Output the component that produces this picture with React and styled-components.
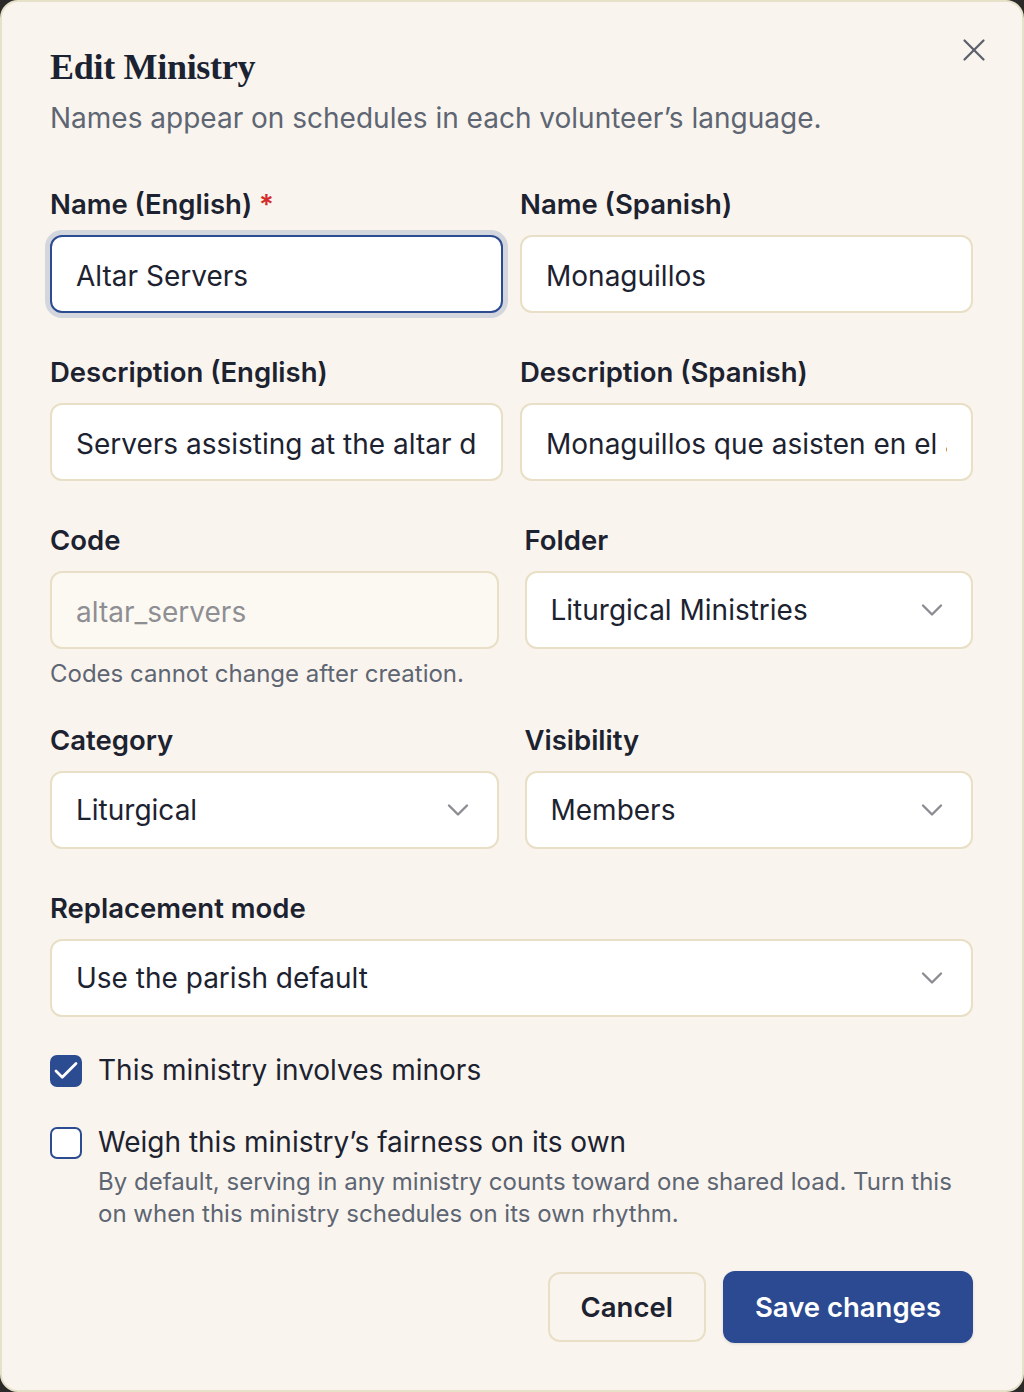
import React from 'react';
import styled, { createGlobalStyle } from 'styled-components';
import { X, ChevronDown, Check } from 'lucide-react';

const GlobalStyle = createGlobalStyle`
  html, body {
    margin: 0;
    padding: 0;
    background: #2b2a28;
  }
  * { box-sizing: border-box; }
  body {
    font-family: Inter, "Noto Sans", sans-serif;
    color: #1d2230;
  }
`

const Chevron = () => <ChevronDown size={36} strokeWidth={1.6} />

export default function App(){
  return (
    <>
      <GlobalStyle />
      <Dialog>
        <CloseButton aria-label='Close'>
          <X size={38} strokeWidth={1.4} />
        </CloseButton>
        <Title>Edit Ministry</Title>
        <Subtitle>Names appear on schedules in each volunteer’s language.</Subtitle>

        <Grid $gap={17} $rowGap={41} $top={50}>
          <Field>
            <Label>Name (English) <Required>*</Required></Label>
            <TextInput $focused readOnly value='Altar Servers' />
          </Field>
          <Field>
            <Label>Name (Spanish)</Label>
            <TextInput readOnly value='Monaguillos' />
          </Field>
          <Field>
            <Label>Description (English)</Label>
            <TextInput readOnly value='Servers assisting at the altar during Mass' />
          </Field>
          <Field>
            <Label>Description (Spanish)</Label>
            <TextInput readOnly value='Monaguillos que asisten en el altar durante la Misa' />
          </Field>
        </Grid>

        <Grid $gap={26} $rowGap={32} $top={41}>
          <Field>
            <Label>Code</Label>
            <TextInput $disabled readOnly value='altar_servers' />
            <Hint>Codes cannot change after creation.</Hint>
          </Field>
          <Field>
            <Label>Folder</Label>
            <Select>Liturgical Ministries<Chevron /></Select>
          </Field>
          <Field>
            <Label>Category</Label>
            <Select>Liturgical<Chevron /></Select>
          </Field>
          <Field>
            <Label>Visibility</Label>
            <Select>Members<Chevron /></Select>
          </Field>
        </Grid>

        <Field $top={41}>
          <Label>Replacement mode</Label>
          <Select>Use the parish default<Chevron /></Select>
        </Field>

        <Checks>
          <CheckRow>
            <Box $checked><Check size={30} strokeWidth={2.2} /></Box>
            <CheckText>
              <CheckLabel>This ministry involves minors</CheckLabel>
            </CheckText>
          </CheckRow>
          <CheckRow>
            <Box />
            <CheckText>
              <CheckLabel>Weigh this ministry’s fairness on its own</CheckLabel>
              <CheckHint>By default, serving in any ministry counts toward one shared load. Turn this on when this ministry schedules on its own rhythm.</CheckHint>
            </CheckText>
          </CheckRow>
        </Checks>

        <Footer>
          <Button>Cancel</Button>
          <Button $primary>Save changes</Button>
        </Footer>
      </Dialog>
    </>
  )
}

const Dialog = styled.div`
  position: relative;
  width: 1024px;
  height: 1392px;
  background: #f9f5ee;
  border: 2px solid #e6e1c9;
  border-radius: 18px;
  padding: 41px 49px 0 48px;
  display: flex;
  flex-direction: column;
`

const CloseButton = styled.button`
  position: absolute;
  top: 29px;
  right: 29px;
  border: none;
  background: none;
  padding: 0;
  color: #5b606a;
  display: flex;
`

const Title = styled.h1`
  margin: 0;
  font-family: "Liberation Serif", "DejaVu Serif", serif;
  font-weight: 700;
  font-size: 36px;
  line-height: 48px;
  letter-spacing: -0.3px;
  color: #1b2232;
`

const Subtitle = styled.p`
  margin: 9px 0 0;
  font-size: 28px;
  line-height: 36px;
  color: #5e6573;
`

const Grid = styled.div`
  display: grid;
  grid-template-columns: 1fr 1fr;
  column-gap: ${p => p.$gap}px;
  row-gap: ${p => p.$rowGap}px;
  margin-top: ${p => p.$top}px;
`

const Field = styled.div`
  display: flex;
  flex-direction: column;
  margin-top: ${p => p.$top || 0}px;
`

const Label = styled.label`
  font-size: 27.5px;
  font-weight: 600;
  line-height: 36px;
  color: #1d2230;
  margin-bottom: 13px;
`

const Required = styled.span`
  color: #d42a2a;
`

const TextInput = styled.input`
  width: 100%;
  height: 78px;
  padding: 3px 24px 0;
  font-family: Inter, sans-serif;
  font-size: 28px;
  border-radius: 12px;
  outline: none;
  border: 2px solid ${p => p.$focused ? '#2c4c91' : '#e9dfc6'};
  background: ${p => p.$disabled ? '#fcf9f3' : '#ffffff'};
  color: ${p => p.$disabled ? '#8f8f93' : '#1d2230'};
  box-shadow: ${p => p.$focused ? '0 0 0 5px #d3d6dd' : 'none'};
`

const Hint = styled.p`
  margin: 9px 0 0;
  font-size: 24px;
  line-height: 32px;
  color: #5e6573;
`

const Select = styled.div`
  height: 78px;
  padding: 0 21px 0 24px;
  display: flex;
  align-items: center;
  justify-content: space-between;
  font-size: 28px;
  background: #ffffff;
  border: 2px solid #e9dfc6;
  border-radius: 12px;
  color: #1d2230;
  svg { color: #8b8d92; }
`

const Checks = styled.div`
  display: flex;
  flex-direction: column;
  gap: 36px;
  margin-top: 35px;
`

const CheckRow = styled.div`
  display: flex;
  align-items: flex-start;
  gap: 16px;
`

const Box = styled.span`
  width: 32px;
  height: 32px;
  flex: none;
  margin-top: 3px;
  border-radius: 7px;
  border: 2px solid #2c4c91;
  background: ${p => p.$checked ? '#2c4c91' : '#ffffff'};
  color: #ffffff;
  display: flex;
  align-items: center;
  justify-content: center;
  svg { flex: none; }
`

const CheckText = styled.div`
  display: flex;
  flex-direction: column;
`

const CheckLabel = styled.span`
  font-size: 28px;
  line-height: 36px;
  color: #1d2230;
`

const CheckHint = styled.span`
  margin-top: 6px;
  font-size: 24px;
  line-height: 32px;
  color: #5e6573;
`

const Footer = styled.div`
  display: flex;
  justify-content: flex-end;
  align-items: center;
  gap: 17px;
  margin-top: 41px;
`

const Button = styled.button`
  height: ${p => p.$primary ? 72 : 70}px;
  padding: 0 ${p => p.$primary ? 30 : 31}px;
  border-radius: 12px;
  font-family: Inter, sans-serif;
  font-size: 27.5px;
  font-weight: 600;
  border: 2px solid ${p => p.$primary ? '#2b4a92' : '#e9dfc6'};
  background: ${p => p.$primary ? '#2b4a92' : '#f9f5ee'};
  color: ${p => p.$primary ? '#ffffff' : '#1d2230'};
  box-shadow: ${p => p.$primary ? '0 1px 3px rgba(0,0,0,0.12)' : 'none'};
`
